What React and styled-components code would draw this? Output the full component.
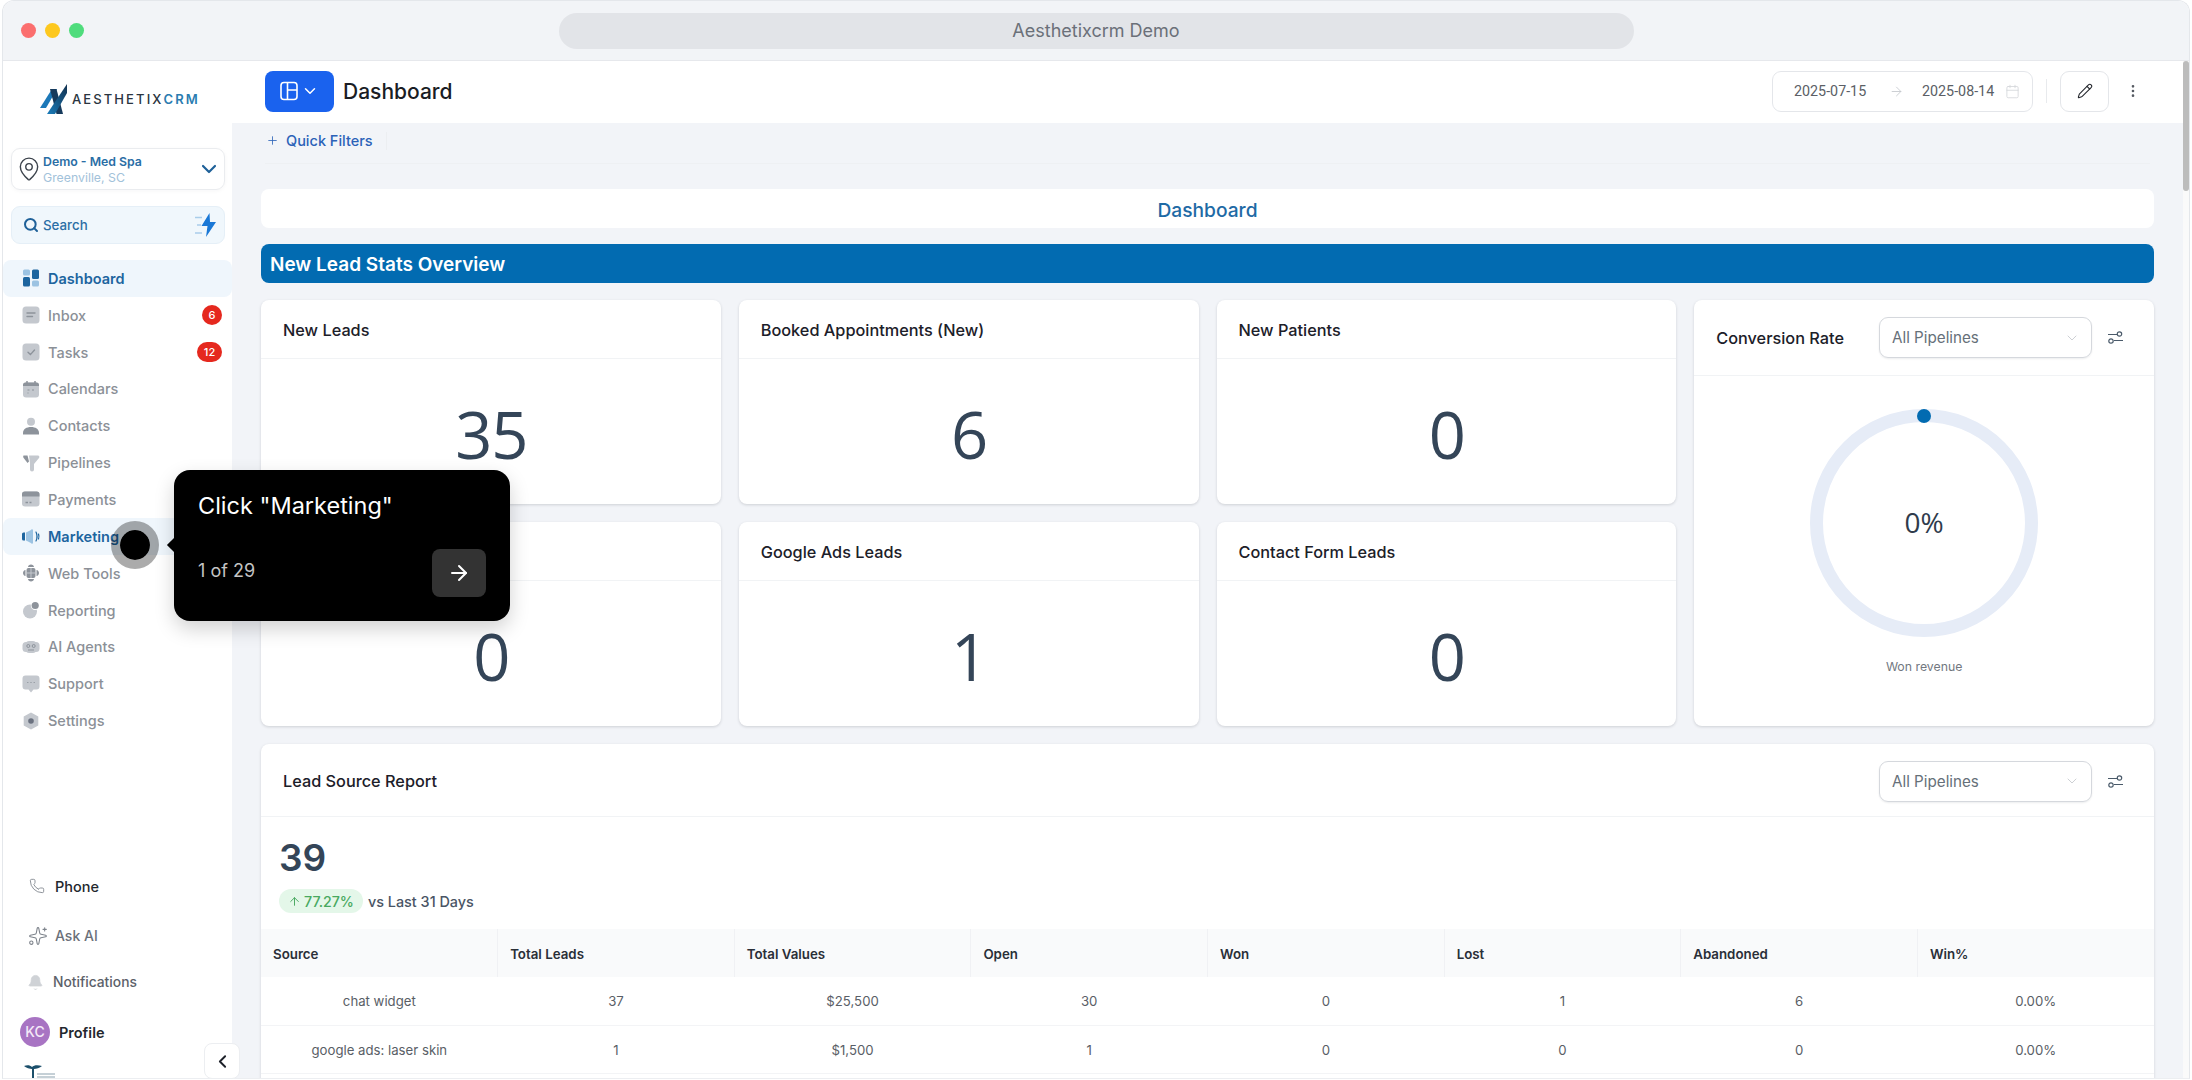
// App.jsx
import React from 'react'
import styled, { createGlobalStyle } from 'styled-components'
import { ArrowRight, ArrowUp, Bell, Calendar, ChevronDown, ChevronLeft, MapPin, MoreVertical, Pencil, Phone, Plus, Search, Sparkles } from 'lucide-react'

const GlobalStyle = createGlobalStyle`
  html, body {
    margin: 0;
    padding: 0;
    height: 100%;
    background: #fff;
    overflow: hidden;
    font-family: Inter, "Liberation Sans", sans-serif;
  }
  * {
    box-sizing: border-box;
  }
`

const Page = styled.div`
  position: relative;
  width: 2192px;
  height: 1080px;
  padding: 0 2px 1px 2px;
  overflow: hidden;
`

const Frame = styled.div`
  display: flex;
  flex-direction: column;
  height: 100%;
  border: 1px solid #e4e7eb;
  border-bottom-color: #eceef1;
  border-radius: 12px 12px 0 0;
  overflow: hidden;
  background: #fff;
`

const TitleBar = styled.div`
  display: grid;
  grid-template-columns: 1fr 1075px 1fr;
  align-items: center;
  flex: none;
  height: 60px;
  padding: 0 18px;
  background: #f2f4f7;
  border-bottom: 1px solid #e6e8ec;
`

const Lights = styled.div`
  display: flex;
  gap: 9px;
`

const Light = styled.span`
  width: 15px;
  height: 15px;
  border-radius: 50%;
  background: ${(p) => p.$color};
`

const UrlPill = styled.div`
  height: 36px;
  border-radius: 18px;
  background: #e2e4e8;
  color: #6b7079;
  font-size: 18px;
  line-height: 36px;
  text-align: center;
`

const Body = styled.div`
  display: flex;
  flex: 1;
  min-height: 0;
`

const Sidebar = styled.aside`
  display: flex;
  flex-direction: column;
  flex: none;
  width: 229px;
  background: #fff;
`

const LogoRow = styled.div`
  display: flex;
  align-items: center;
  gap: 5px;
  height: 87px;
  padding: 0 0 12px 37px;
`

const LogoText = styled.span`
  font-size: 13px;
  font-weight: 500;
  letter-spacing: 2.1px;
  color: #2a3440;
  white-space: nowrap;

  b {
    font-weight: 600;
    color: #2a7cb0;
  }
`

const LocationBox = styled.div`
  display: flex;
  align-items: center;
  height: 42px;
  margin: 0 7px 0 8px;
  padding: 0 3px 0 4px;
  border: 1px solid #eaecef;
  border-radius: 9px;
  box-shadow: 0 1px 4px rgba(16, 24, 40, 0.04);
`

const LocationText = styled.div`
  flex: 1;
  margin-left: 1px;
  padding-top: 1px;
  line-height: 16px;
`

const LocationName = styled.div`
  font-size: 12.3px;
  font-weight: 600;
  color: #2a6ea5;
`

const LocationCity = styled.div`
  font-size: 12.3px;
  color: #a2c2da;
`

const SearchBox = styled.div`
  display: flex;
  align-items: center;
  height: 38px;
  margin: 16px 7px 0 8px;
  padding: 0 6px 0 11px;
  background: #f0f7fc;
  border: 1px solid #e5eff7;
  border-radius: 9px;
  color: #1f6199;
`

const SearchLabel = styled.span`
  flex: 1;
  margin-left: 4px;
  font-size: 13.3px;
  font-weight: 500;
  color: #2a6ea5;
`

const NavList = styled.nav`
  display: flex;
  flex-direction: column;
  margin-top: 16px;
`

const NavItem = styled.div`
  display: flex;
  align-items: center;
  height: 36.85px;
  padding: 0 10px 0 19px;
  border-radius: 8px;
  background: ${(p) => (p.$active ? '#eff6fc' : 'transparent')};
  color: ${(p) => (p.$active ? '#1d659f' : '#8b9097')};
  font-size: 14.5px;
  font-weight: ${(p) => (p.$active ? 600 : 500)};
`

const NavLabel = styled.span`
  flex: 1;
  margin-left: 8px;
`

const CountBadge = styled.span`
  min-width: ${(p) => (p.$wide ? '25px' : '20px')};
  height: 20px;
  border-radius: 10px;
  background: #e5281e;
  color: #fff;
  font-size: 11px;
  font-weight: 500;
  line-height: 20px;
  text-align: center;
`

const BottomList = styled.div`
  display: flex;
  flex-direction: column;
  margin-top: auto;
`

const BottomItem = styled.div`
  display: flex;
  align-items: center;
  height: ${(p) => p.$h}px;
  padding-left: ${(p) => p.$pad}px;
  gap: ${(p) => p.$gap}px;
  color: ${(p) => p.$color};
  font-size: ${(p) => p.$size || 14.5}px;
  font-weight: 500;

  svg {
    color: ${(p) => p.$iconColor || '#7d838b'};
  }
`

const Avatar = styled.span`
  width: 30px;
  height: 30px;
  border-radius: 50%;
  background: #a874c3;
  color: #f4e9f8;
  font-size: 14px;
  line-height: 30px;
  text-align: center;
`

const ProfileLabel = styled.span`
  font-weight: 600;
`

const TinyLogo = styled.svg`
  display: block;
  flex: none;
  width: 34px;
  height: 13px;
  margin: 6px 0 0 21px;
`

const Main = styled.main`
  display: flex;
  flex-direction: column;
  flex: 1;
  min-width: 0;
  background: #f2f4f8;
`

const TopBar = styled.header`
  display: flex;
  align-items: center;
  flex: none;
  height: 62px;
  padding: 0 42px 2px 33px;
  background: #fff;
`

const LayoutButton = styled.button`
  display: flex;
  align-items: center;
  justify-content: center;
  gap: 3px;
  width: 69px;
  height: 41px;
  padding: 0;
  border: 0;
  border-radius: 8px;
  background: #1a62ee;
  color: #fff;
`

const PageTitle = styled.h1`
  flex: 1;
  margin: 0 0 0 9px;
  color: #1a1d24;
  font-size: 21px;
  font-weight: 500;
`

const DateRange = styled.div`
  display: flex;
  align-items: center;
  width: 261px;
  height: 41px;
  padding: 0 12px 0 21px;
  border: 1px solid #e4e6ea;
  border-radius: 9px;
  color: #5b5f66;
  font-family: Roboto, sans-serif;
  font-size: 14.3px;
`

const DateArrow = styled.span`
  display: flex;
  margin: 0 18px 0 23px;
  color: #c2c5ca;
`

const DateValue = styled.span`
  flex: none;
  width: 72px;
  white-space: nowrap;
`

const CalendarSlot = styled.span`
  display: flex;
  margin-left: auto;
  color: #d3d5d9;
`

const VLine = styled.span`
  width: 1px;
  height: 24px;
  margin: 0 13px;
  background: #e8eaed;
`

const IconButton = styled.button`
  display: flex;
  align-items: center;
  justify-content: center;
  width: 49px;
  height: 41px;
  padding: 0;
  border: 1px solid #e4e6ea;
  border-radius: 9px;
  background: #fff;
  color: #25282e;
`

const MoreButton = styled.span`
  display: flex;
  margin-left: 16px;
  color: #555a62;
`

const Scroll = styled.div`
  flex: 1;
  min-height: 0;
  overflow: hidden;
`

const QuickFilters = styled.div`
  display: flex;
  align-items: center;
  height: 41px;
  margin: 0 33px;
  padding: 0 0 5px 1px;
  gap: 7px;
  border-bottom: 1px solid #eef0f3;
  color: #2b62b8;
  font-size: 14.5px;
  font-weight: 500;
`

const QuickDivider = styled.span`
  width: 1px;
  height: 18px;
  margin-left: 6px;
  background: #eceef1;
`

const Content = styled.div`
  padding: 25px 29px 0;
`

const WhiteBanner = styled.div`
  height: 39px;
  border-radius: 8px;
  background: #fff;
  color: #1e6aa5;
  font-size: 19.2px;
  font-weight: 500;
  line-height: 42px;
  text-align: center;
`

const BlueBanner = styled.h2`
  height: 39px;
  margin: 16px 0 17px;
  padding-left: 9px;
  border-radius: 8px;
  background: #026bb1;
  color: #fff;
  font-size: 19px;
  font-weight: 600;
  line-height: 41px;
`

const Grid = styled.div`
  display: grid;
  grid-template-columns: repeat(4, 1fr);
  grid-template-rows: 204px 204px;
  gap: 18px;
`

const Card = styled.section`
  display: flex;
  flex-direction: column;
  min-width: 0;
  border-radius: 8px;
  background: #fff;
  box-shadow: 0 1px 3px rgba(16, 24, 40, 0.16);
`

const RateCard = styled(Card)`
  grid-column: 4;
  grid-row: 1 / span 2;
`

const CardHead = styled.div`
  display: flex;
  align-items: center;
  flex: none;
  height: ${(p) => p.$h || 59}px;
  padding: ${(p) => (p.$flush ? 0 : 2)}px 22px 0;
  border-bottom: 1px solid #f1f3f5;
`

const CardTitle = styled.div`
  flex: 1;
  color: #1c2029;
  font-size: 16.3px;
  font-weight: 500;
`

const StatValue = styled.div`
  display: flex;
  flex: 1;
  align-items: center;
  justify-content: center;
  padding: 5px 0 0 1px;
  color: #344558;
  font-family: "Open Sans", sans-serif;
  font-size: 65px;
  letter-spacing: -1px;
  line-height: 1;
`

const PipelineSelect = styled.div`
  display: flex;
  align-items: center;
  justify-content: space-between;
  width: 213px;
  height: 41px;
  padding: 0 11px 0 12px;
  border: 1px solid #d5d8dd;
  border-radius: 9px;
  box-shadow: 0 1px 2px rgba(16, 24, 40, 0.08);
  color: #667079;
  font-size: 15.2px;

  svg {
    color: #c5c8cd;
  }
`

const FilterIcon = styled.svg`
  flex: none;
  width: 15px;
  height: 13px;
  margin: 0 9px 0 16px;
  color: #4a5a6a;
`

const RateBody = styled.div`
  display: flex;
  flex: 1;
  flex-direction: column;
  align-items: center;
  padding-top: 33px;
`

const RingWrap = styled.div`
  display: grid;
  place-items: center;
  width: 228px;
  height: 228px;

  > * {
    grid-area: 1 / 1;
  }
`

const RingValue = styled.span`
  margin-top: -2px;
  color: #2f3b4c;
  font-family: "Open Sans", sans-serif;
  font-size: 28px;
`

const RingCaption = styled.div`
  margin-top: 22px;
  color: #72787f;
  font-size: 12.3px;
`

const ReportCard = styled(Card)`
  margin-top: 18px;
  padding-bottom: 40px;
`

const ReportStats = styled.div`
  padding: 18px 18px 16px;
`

const BigNumber = styled.div`
  color: #344558;
  font-size: 37px;
  font-weight: 600;
  line-height: 45px;
`

const TrendRow = styled.div`
  display: flex;
  align-items: center;
  gap: 5px;
  margin-top: 9px;
  color: #4a5565;
  font-size: 14.4px;
  font-weight: 500;
`

const TrendBadge = styled.span`
  display: flex;
  align-items: center;
  gap: 3px;
  height: 24px;
  padding: 0 9px;
  border-radius: 12px;
  background: #e4f7e9;
  color: #48a960;
  font-size: 14.2px;
`

const Table = styled.table`
  width: 100%;
  table-layout: fixed;
  border-collapse: collapse;
`

const Th = styled.th`
  height: 48px;
  padding: 2px 12px 0;
  background: #f9fafb;
  border-right: 1px solid #f0f1f4;
  color: #2a2f38;
  font-size: 13.3px;
  font-weight: 600;
  text-align: left;

  &:last-child {
    border-right: 0;
  }
`

const Td = styled.td`
  height: 48px;
  padding: 1px 0 0;
  border-bottom: 1px solid #f3f4f6;
  color: #595e66;
  font-size: 13.2px;
  text-align: center;
`

const CollapseButton = styled.button`
  position: absolute;
  left: 204px;
  top: 1043px;
  display: flex;
  align-items: center;
  justify-content: center;
  width: 36px;
  height: 36px;
  padding: 0;
  border: 1px solid #eceef1;
  border-radius: 8px;
  background: #fff;
  color: #1d2129;
`

const Hotspot = styled.span`
  position: absolute;
  left: 111px;
  top: 521px;
  width: 48px;
  height: 48px;
  border: 9px solid rgba(0, 0, 0, 0.33);
  border-radius: 50%;
  background: #000;
  background-clip: padding-box;
`

const Tooltip = styled.div`
  position: absolute;
  left: 174px;
  top: 470px;
  display: flex;
  flex-direction: column;
  justify-content: space-between;
  width: 336px;
  height: 151px;
  padding: 21px 24px 24px;
  border-radius: 16px;
  background: #000;
  box-shadow: 0 8px 20px rgba(0, 0, 0, 0.18);
  color: #fff;

  &::before {
    content: '';
    position: absolute;
    left: -5px;
    top: 70px;
    width: 10px;
    height: 10px;
    background: #000;
    transform: rotate(45deg);
  }
`

const TooltipTitle = styled.div`
  font-size: 23.5px;
  line-height: 30px;
`

const TooltipFoot = styled.div`
  display: flex;
  align-items: center;
  justify-content: space-between;
  color: #c4c4c4;
  font-size: 18px;
`

const StepCount = styled.span`
  margin-bottom: 6px;
`

const NextButton = styled.button`
  display: flex;
  align-items: center;
  justify-content: center;
  width: 54px;
  height: 48px;
  padding: 0;
  border: 0;
  border-radius: 8px;
  background: #333;
  color: #fff;
`

const ScrollTrack = styled.div`
  flex: none;
  width: 6px;
  background: #fafafa;
`

const ScrollThumb = styled.div`
  height: 130px;
  border-radius: 3px;
  background: #bcbcbc;
`

const G1 = '#c4c8ce'
const G2 = '#8d939b'
const B1 = '#9cc3e2'
const B2 = '#1d659f'

const navIcons = {
  dashboard: (
    <>
      <rect x="0" y="0" width="7" height="6" rx="1.5" fill={B1} />
      <rect x="9" y="0" width="7" height="9.5" rx="1.5" fill={B2} />
      <rect x="0" y="7.5" width="7" height="9.5" rx="1.5" fill={B2} />
      <rect x="9" y="11" width="7" height="6" rx="1.5" fill={B1} />
    </>
  ),
  inbox: (
    <>
      <rect x="-0.5" y="0" width="17" height="17" rx="3.5" fill={G1} />
      <path d="M4 6.5h8M4 10h5.5" stroke={G2} strokeWidth="1.4" strokeLinecap="round" />
    </>
  ),
  tasks: (
    <>
      <rect x="-0.5" y="0" width="17" height="17" rx="3.5" fill={G1} />
      <path d="M5 8.7l2.4 2.4L11.5 6.5" stroke={G2} strokeWidth="1.4" fill="none" strokeLinecap="round" />
    </>
  ),
  calendars: (
    <>
      <rect x="0" y="2" width="16" height="15" rx="3" fill={G1} />
      <path d="M0 5.5V4.5a2.5 2.5 0 0 1 2.5-2.5h11A2.5 2.5 0 0 1 16 4.5v1z" fill={G2} />
      <path d="M4 0.5v3M12 0.5v3" stroke={G2} strokeWidth="1.5" />
      <path d="M4.5 9.5h2M4.5 12.5h1M9 9.5h2" stroke={G2} strokeWidth="1.2" />
    </>
  ),
  contacts: (
    <>
      <circle cx="8" cy="4.2" r="4" fill={G1} />
      <path d="M0 17v-1.5C0 11.5 3.5 9.5 8 9.5s8 2 8 6V17z" fill={G2} />
    </>
  ),
  pipelines: (
    <>
      <path d="M6 1h9a1.5 1.5 0 0 1 1 2.5L11 9.5V15a2 2 0 0 1-4 0V8.5z" fill={G1} />
      <path d="M.7 1H4.5L6 7 4.5 8.5.5 3.2C0 2.3.1 1.3.7 1z" fill={G2} />
    </>
  ),
  payments: (
    <>
      <rect x="-1" y="1" width="17.5" height="15" rx="3" fill={G1} />
      <path d="M-1 6V3.8A2.8 2.8 0 0 1 1.8 1h11.9a2.8 2.8 0 0 1 2.8 2.8V6z" fill={G2} />
      <path d="M2.5 12h2.5M6.5 12h2" stroke={G2} strokeWidth="1.3" />
    </>
  ),
  marketing: (
    <>
      <path d="M-1 6.5a1.5 1.5 0 0 1 1.5-1.5H2v8H.5A1.5 1.5 0 0 1-1 11.5z" fill={B2} />
      <path d="M3 5l5-2.5A1 1 0 0 1 10 3v12a1 1 0 0 1-2 .5L3 13z" fill={B1} />
      <path d="M13 4.5c1.4 3 1.4 6 0 9M15.5 6.5c.6 1.6.6 3.4 0 5" stroke={B2} strokeWidth="1.2" fill="none" strokeLinecap="round" />
    </>
  ),
  webTools: (
    <>
      <rect x="3.5" y="3.5" width="9" height="10" rx="2" fill={G2} />
      <path d="M5 2.5C5 1 6.5 0 8 0s3 1 3 2.5zM5 14.5h6c0 1.5-1.5 2.5-3 2.5s-3-1-3-2.5zM2.5 5.5v6C1 11.5 0 10 0 8.5S1 5.5 2.5 5.5zM13.5 5.5c1.5 0 2.5 1.5 2.5 3s-1 3-2.5 3z" fill={G2} />
      <path d="M8 3.5v10M3.5 8.5h9" stroke={G1} strokeWidth="1" />
    </>
  ),
  reporting: (
    <>
      <circle cx="7" cy="10" r="7" fill={G1} />
      <circle cx="12" cy="4.2" r="4.2" fill="#fff" />
      <circle cx="12.2" cy="4" r="3.6" fill={G2} />
    </>
  ),
  agents: (
    <>
      <rect x="-0.5" y="3.5" width="17" height="10" rx="3.5" fill={G1} />
      <rect x="3" y="2.5" width="10" height="12" rx="3" fill={G1} />
      <circle cx="5.3" cy="7.5" r="1.5" fill="none" stroke={G2} strokeWidth="1" />
      <circle cx="10.7" cy="7.5" r="1.5" fill="none" stroke={G2} strokeWidth="1" />
      <path d="M5 11.5h6" stroke={G2} strokeWidth="1" />
    </>
  ),
  support: (
    <>
      <path d="M2.5 0h11a3 3 0 0 1 3 3v8a3 3 0 0 1-3 3h-3L8 17l-2.500-3h-3a3 3 0 0 1-3-3V3a3 3 0 0 1 3-3z" fill={G1} />
      <path d="M4.700 7h.2M7.900 7h.2M11.100 7h.2" stroke={G2} strokeWidth="1.2" strokeLinecap="round" />
    </>
  ),
  settings: (
    <>
      <path d="M8 0l7.300 4v9L8 17 .7 13V4z" fill={G1} />
      <circle cx="8" cy="8.5" r="2.8" fill="#6b7280" />
    </>
  ),
}

const NavGlyph = ({ name }) => (
  <svg width="18" height="18" viewBox="-1 -0.5 18 18" style={{ flex: 'none', overflow: 'visible' }}>
    {navIcons[name]}
  </svg>
)

const BoltIcon = () => (
  <svg width="24" height="24" viewBox="0 0 24 24">
    <path d="M1 4.5h7M3 12h4M1 20h7" stroke="#a9cdea" strokeWidth="1.5" />
    <path d="M15.500 0 7.500 13h6l-1.500 11 10-15h-6z" fill="#1a78d6" />
  </svg>
)

const Logo = () => (
  <svg width="27" height="30" viewBox="0 0 27 30" style={{ flex: 'none' }}>
    <defs>
      <linearGradient id="lg" x1="0" y1="1" x2="1" y2="0">
        <stop offset="0" stopColor="#1a7dbb" />
        <stop offset="1" stopColor="#12314f" />
      </linearGradient>
    </defs>
    <path d="M0 24 12 5h5L6 24z" fill="#1c78b8" />
    <path d="M10 5h6.500L23 30h-6.500z" fill="#163a5c" />
    <path d="M27 0 7 30H15L27 9z" fill="url(#lg)" />
  </svg>
)

const LayoutGlyph = () => (
  <svg width="18" height="20" viewBox="0 0 18 20" fill="none" stroke="currentColor" strokeWidth="1.6">
    <rect x="1" y="1.5" width="16" height="17" rx="3" />
    <path d="M7.500 1.500v17M7.500 9H17" />
  </svg>
)

const FilterGlyph = () => (
  <FilterIcon viewBox="0 0 15 13" fill="none" stroke="currentColor" strokeWidth="1.2">
    <path d="M0 3.5h9M6 9.5h9" />
    <circle cx="11.5" cy="3" r="2.2" />
    <circle cx="3" cy="10" r="2.2" />
  </FilterIcon>
)

const ProgressRing = () => (
  <svg width="228" height="228" viewBox="0 0 228 228">
    <circle cx="114" cy="114" r="107.5" fill="none" stroke="#e6ecf7" strokeWidth="13" />
    <circle cx="114" cy="7" r="7" fill="#026bb1" />
  </svg>
)

const navItems = [
  { key: 'dashboard', label: 'Dashboard', active: true },
  { key: 'inbox', label: 'Inbox', count: '6' },
  { key: 'tasks', label: 'Tasks', count: '12' },
  { key: 'calendars', label: 'Calendars' },
  { key: 'contacts', label: 'Contacts' },
  { key: 'pipelines', label: 'Pipelines' },
  { key: 'payments', label: 'Payments' },
  { key: 'marketing', label: 'Marketing', active: true },
  { key: 'webTools', label: 'Web Tools' },
  { key: 'reporting', label: 'Reporting' },
  { key: 'agents', label: 'AI Agents' },
  { key: 'support', label: 'Support' },
  { key: 'settings', label: 'Settings' },
]

const statCards = [
  { title: 'New Leads', value: '35' },
  { title: 'Booked Appointments (New)', value: '6' },
  { title: 'New Patients', value: '0' },
  { title: 'Call Leads', value: '0' },
  { title: 'Google Ads Leads', value: '1' },
  { title: 'Contact Form Leads', value: '0' },
]

const columns = ['Source', 'Total Leads', 'Total Values', 'Open', 'Won', 'Lost', 'Abandoned', 'Win%']

const rows = [
  ['chat widget', '37', '$25,500', '30', '0', '1', '6', '0.00%'],
  ['google ads: laser skin', '1', '$1,500', '1', '0', '0', '0', '0.00%'],
]

const App = () => (
  <Page>
    <GlobalStyle />
    <Frame>
      <TitleBar>
        <Lights>
          <Light $color="#fb6e6e" />
          <Light $color="#fdc81f" />
          <Light $color="#4fdc7c" />
        </Lights>
        <UrlPill>Aesthetixcrm Demo</UrlPill>
      </TitleBar>
      <Body>
        <Sidebar>
          <LogoRow>
            <Logo />
            <LogoText>
              AESTHETIX<b>CRM</b>
            </LogoText>
          </LogoRow>
          <LocationBox>
            <MapPin size={26} strokeWidth={1.3} color="#3d444d" />
            <LocationText>
              <LocationName>Demo - Med Spa</LocationName>
              <LocationCity>Greenville, SC</LocationCity>
            </LocationText>
            <ChevronDown size={24} strokeWidth={2.2} color="#1f6199" />
          </LocationBox>
          <SearchBox>
            <Search size={16} strokeWidth={3} />
            <SearchLabel>Search</SearchLabel>
            <BoltIcon />
          </SearchBox>
          <NavList>
            {navItems.map((item) => (
              <NavItem key={item.key} $active={item.active}>
                <NavGlyph name={item.key} />
                <NavLabel>{item.label}</NavLabel>
                {item.count && <CountBadge $wide={item.count.length > 1}>{item.count}</CountBadge>}
              </NavItem>
            ))}
          </NavList>
          <BottomList>
            <BottomItem $h={52} $pad={26} $gap={10} $color="#23272e">
              <Phone size={16} strokeWidth={1.3} />
              Phone
            </BottomItem>
            <BottomItem $h={47} $pad={25} $gap={7} $color="#6b7079" $size={14}>
              <Sparkles size={20} strokeWidth={1.3} />
              Ask AI
            </BottomItem>
            <BottomItem $h={46} $pad={24} $gap={9} $color="#5c6169" $size={13.8} $iconColor="#cfd2d6">
              <Bell size={17} fill="#cfd2d6" strokeWidth={1} />
              Notifications
            </BottomItem>
            <BottomItem $h={54} $pad={17} $gap={9} $color="#23272e">
              <Avatar>KC</Avatar>
              <ProfileLabel>Profile</ProfileLabel>
            </BottomItem>
            <TinyLogo viewBox="0 0 34 13">
              <path d="M0 1c3-1 6-1 8 1 2-2 6-2 10-1-2 2-6 3-8 3v9H8V4C6 4 2 3 0 1z" fill="#1b4f6b" />
              <path d="M13 9h18M13 12h18" stroke="#8ba1ae" strokeWidth="1" />
            </TinyLogo>
          </BottomList>
        </Sidebar>
        <Main>
          <TopBar>
            <LayoutButton>
              <LayoutGlyph />
              <ChevronDown size={18} strokeWidth={2} />
            </LayoutButton>
            <PageTitle>Dashboard</PageTitle>
            <DateRange>
              <DateValue>2025-07-15</DateValue>
              <DateArrow>
                <ArrowRight size={15} strokeWidth={1.3} />
              </DateArrow>
              <DateValue>2025-08-14</DateValue>
              <CalendarSlot>
                <Calendar size={15} strokeWidth={1.3} />
              </CalendarSlot>
            </DateRange>
            <VLine />
            <IconButton>
              <Pencil size={16} strokeWidth={1.6} />
            </IconButton>
            <MoreButton>
              <MoreVertical size={16} strokeWidth={2} />
            </MoreButton>
          </TopBar>
          <Scroll>
            <QuickFilters>
              <Plus size={13} strokeWidth={1.5} />
              Quick Filters
              <QuickDivider />
            </QuickFilters>
            <Content>
              <WhiteBanner>Dashboard</WhiteBanner>
              <BlueBanner>New Lead Stats Overview</BlueBanner>
              <Grid>
                {statCards.map((c) => (
                  <Card key={c.title}>
                    <CardHead>
                      <CardTitle>{c.title}</CardTitle>
                    </CardHead>
                    <StatValue>{c.value}</StatValue>
                  </Card>
                ))}
                <RateCard>
                  <CardHead $h={76} $flush>
                    <CardTitle>Conversion Rate</CardTitle>
                    <PipelineSelect>
                      All Pipelines
                      <ChevronDown size={16} strokeWidth={1.3} />
                    </PipelineSelect>
                    <FilterGlyph />
                  </CardHead>
                  <RateBody>
                    <RingWrap>
                      <ProgressRing />
                      <RingValue>0%</RingValue>
                    </RingWrap>
                    <RingCaption>Won revenue</RingCaption>
                  </RateBody>
                </RateCard>
              </Grid>
              <ReportCard>
                <CardHead $h={73}>
                  <CardTitle>Lead Source Report</CardTitle>
                  <PipelineSelect>
                    All Pipelines
                    <ChevronDown size={16} strokeWidth={1.3} />
                  </PipelineSelect>
                  <FilterGlyph />
                </CardHead>
                <ReportStats>
                  <BigNumber>39</BigNumber>
                  <TrendRow>
                    <TrendBadge>
                      <ArrowUp size={13} strokeWidth={1.8} />
                      77.27%
                    </TrendBadge>
                    vs Last 31 Days
                  </TrendRow>
                </ReportStats>
                <Table>
                  <thead>
                    <tr>
                      {columns.map((c) => (
                        <Th key={c}>{c}</Th>
                      ))}
                    </tr>
                  </thead>
                  <tbody>
                    {rows.map((r) => (
                      <tr key={r[0]}>
                        {r.map((v, i) => (
                          <Td key={i}>{v}</Td>
                        ))}
                      </tr>
                    ))}
                  </tbody>
                </Table>
              </ReportCard>
            </Content>
          </Scroll>
        </Main>
        <ScrollTrack>
          <ScrollThumb />
        </ScrollTrack>
      </Body>
    </Frame>
    <CollapseButton>
      <ChevronLeft size={21} strokeWidth={2.2} />
    </CollapseButton>
    <Hotspot />
    <Tooltip>
      <TooltipTitle>Click "Marketing"</TooltipTitle>
      <TooltipFoot>
        <StepCount>1 of 29</StepCount>
        <NextButton>
          <ArrowRight size={24} strokeWidth={2} />
        </NextButton>
      </TooltipFoot>
    </Tooltip>
  </Page>
)

export default App
